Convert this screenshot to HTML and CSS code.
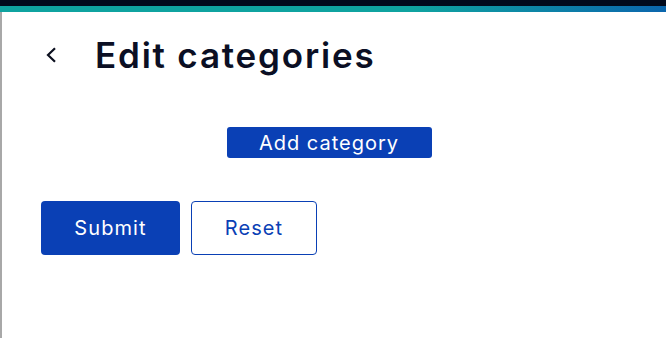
FILE: index.html
```html
<!DOCTYPE html>
<html>
<head>
<meta charset="utf-8">
<link rel="stylesheet" href="styles.css">
</head>
<body>
<div class="topbar"></div>
<div class="accent"></div>
<main class="page">
  <header class="header">
    <button class="back" aria-label="Back">
      <svg width="12" height="16" viewBox="0 0 12 16"><path d="M10 1.2 L3 8 L10 14.8" fill="none" stroke="#0b0f1e" stroke-width="2.2"/></svg>
    </button>
    <h1 class="title">Edit categories</h1>
  </header>
  <div class="add-row">
    <button class="add">Add category</button>
  </div>
  <div class="actions">
    <button class="btn primary">Submit</button>
    <button class="btn secondary">Reset</button>
  </div>
</main>
</body>
</html>
```
FILE: styles.css
```css
html, body { margin: 0; padding: 0; background: #fff; }
body { font-family: Inter, "Noto Sans", sans-serif; height: 338px; overflow: hidden; display: flex; flex-direction: column; }
.topbar { height: 6px; background: #010a1c; }
.accent { height: 6px; background: linear-gradient(to right, #0fa3a0 0%, #0fa3a0 62%, #0b66ad 100%); }
.page { flex: 1; border-left: 2px solid #a8a8a8; padding: 0 49px 0 39px; display: flex; flex-direction: column; }
.header { display: flex; align-items: center; height: 86px; }
.back { border: 0; background: none; padding: 0; margin-left: 4px; width: 12px; height: 16px; display: flex; }
.title { margin: 0 0 0 38px; font-size: 35px; font-weight: 600; color: #0b0f24; letter-spacing: 1.8px; }
.add-row { display: flex; justify-content: center; margin-top: 29px; }
.add { background: #0a40b5; color: #fff; border: 0; border-radius: 3px; width: 205px; height: 31px; font-family: inherit; font-size: 20px; padding: 0; letter-spacing: 1px; }
.actions { display: flex; gap: 11px; margin-top: 43px; }
.btn { height: 54px; border-radius: 4px; font-family: inherit; font-size: 20px; padding: 0; letter-spacing: 1.1px; }
.primary { width: 139px; background: #0a40b5; color: #fff; border: 0; }
.secondary { width: 126px; background: #fff; color: #0a40b5; border: 1px solid #0a40b5; }
```
